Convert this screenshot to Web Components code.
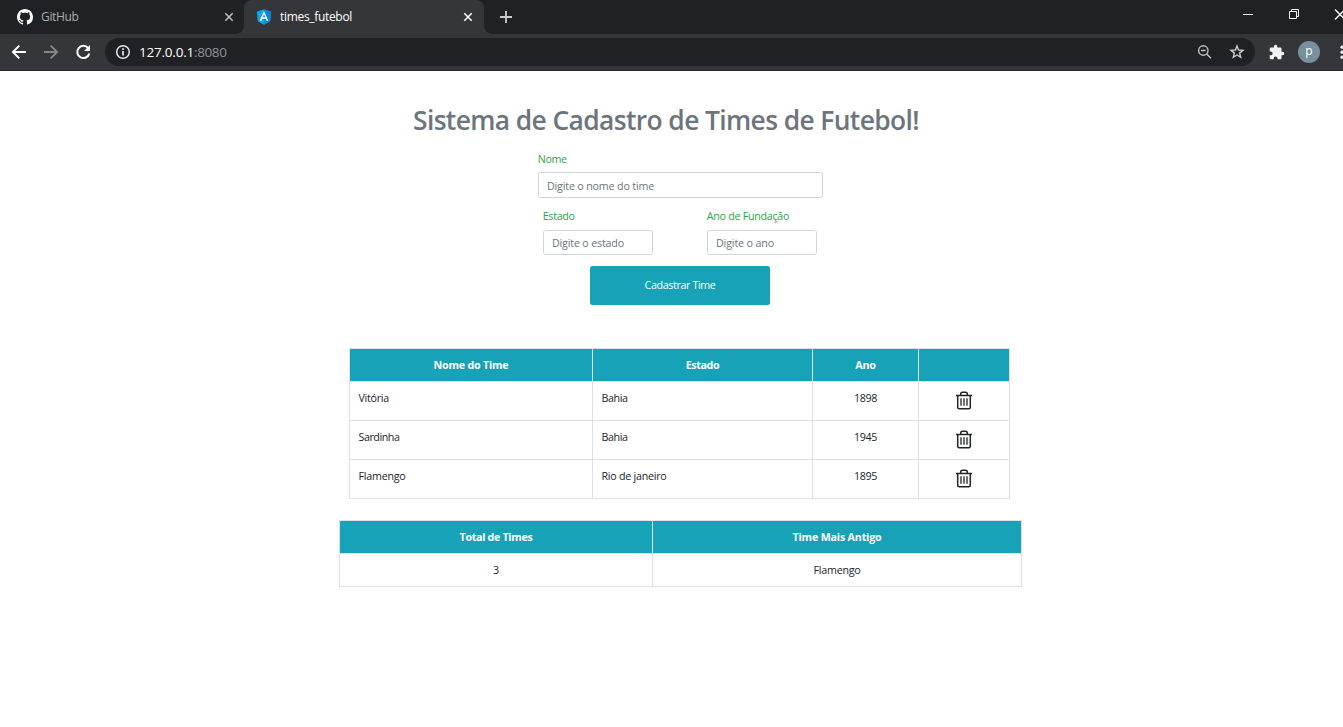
<!DOCTYPE html>
<html lang="pt-BR">
<head>
<meta charset="utf-8">
<title>times_futebol</title>
<style>
html,body{margin:0;height:100%;overflow:hidden;background:#fff}
body{font-family:"Open Sans","Noto Sans",sans-serif;font-size:10.7px;color:#212529}
</style>
</head>
<body>
<browser-window>
  <browser-tabs slot="tabs"></browser-tabs>
  <browser-toolbar slot="toolbar"></browser-toolbar>
  <teams-page></teams-page>
</browser-window>
<script>
const define = (name, html, setup) => customElements.define(name, class extends HTMLElement {
  connectedCallback() {
    if (this.shadowRoot) return;
    const t = document.createElement('template');
    t.innerHTML = html;
    this.attachShadow({mode: 'open'}).append(t.content.cloneNode(true));
    if (setup) setup.call(this, this.shadowRoot);
  }
});

// One-line label whose letter spacing is adjusted to fill the width in its "w" attribute.
define('fit-text', `<style>:host{display:inline-block;white-space:pre;line-height:1.5;flex:none}span{display:inline-block}</style><span><slot></slot></span>`, function (root) {
  const w = parseFloat(this.getAttribute('w')), s = root.querySelector('span'), n = this.textContent.length;
  if (!w) return;
  this.style.width = w + 'px';
  s.style.letterSpacing = ((w - s.getBoundingClientRect().width) / n) + 'px';
});

define('browser-window', `<style>:host{display:flex;flex-direction:column;height:100vh}</style>
<slot name="tabs"></slot><slot name="toolbar"></slot><slot></slot>`);

define('browser-tabs', `<style>
:host{display:flex;height:34px;background:#202124;color:#a9adb1;font-size:12px;overflow:hidden}
svg{flex:none;display:block}
.tab{display:flex;align-items:center;box-sizing:border-box;width:244px;padding:0 10px 0 17px;height:34px}
.tab fit-text{margin-left:8px}
.tab .x{margin-left:auto}
.on{width:240px;padding:0 11.5px 0 12px;background:#35363a;color:#fff;border-radius:8px 8px 0 0;position:relative}
.on::before,.on::after{content:"";position:absolute;bottom:0;width:8px;height:8px}
.on::before{left:-8px;background:radial-gradient(circle at 0 0,transparent 7.6px,#35363a 8.2px)}
.on::after{right:-8px;background:radial-gradient(circle at 100% 0,transparent 7.6px,#35363a 8.2px)}
.new{margin:11px 0 0 16px}
.win{display:flex;margin-left:auto}
</style>
<div class="tab"><svg width="16" height="16" viewBox="0 0 16 16"><path fill="#fff" d="M8 0C3.58 0 0 3.58 0 8c0 3.54 2.29 6.53 5.47 7.59.4.07.55-.17.55-.38 0-.19-.01-.82-.01-1.49-2.01.37-2.53-.49-2.69-.94-.09-.23-.48-.94-.82-1.13-.28-.15-.68-.52-.01-.53.63-.01 1.08.58 1.23.82.72 1.21 1.87.87 2.33.66.07-.52.28-.87.51-1.07-1.78-.2-3.64-.89-3.64-3.95 0-.87.31-1.59.82-2.15-.08-.2-.36-1.02.08-2.12 0 0 .67-.21 2.2.82.64-.18 1.32-.27 2-.27s1.36.09 2 .27c1.53-1.04 2.2-.82 2.2-.82.44 1.1.16 1.92.08 2.12.51.56.82 1.27.82 2.15 0 3.07-1.87 3.75-3.65 3.95.29.25.54.73.54 1.48 0 1.07-.01 1.93-.01 2.2 0 .21.15.46.55.38A8.01 8.01 0 0 0 16 8c0-4.42-3.58-8-8-8z"/></svg><fit-text w="37.5">GitHub</fit-text>
<svg class="x" width="10" height="10" viewBox="0 0 10 10"><path d="M1.3 1.3l7.4 7.4M8.7 1.3L1.3 8.7" stroke="#c2c4c7" stroke-width="1.5"/></svg></div>
<div class="tab on"><svg width="16" height="16" viewBox="0 0 16 16"><path fill="#0fa4f0" d="M8 .2l7.2 2.6-1.1 9.4L8 15.7l-6.1-3.5L.8 2.8z"/><path fill="#0988d4" d="M8 .2l7.2 2.6-1.1 9.4L8 15.7z"/><path fill="#fff" fill-rule="evenodd" d="M8 2L3.6 11.900h1.700l.9-2.200h3.600l.9 2.200h1.700zM8 5.200l1.300 3.100H6.700z"/></svg><fit-text w="72">times_futebol</fit-text>
<svg class="x" width="10" height="10" viewBox="0 0 10 10"><path d="M1.300 1.300l7.400 7.400M8.700 1.300L1.300 8.700" stroke="#fff" stroke-width="1.600"/></svg></div>
<svg class="new" width="12" height="12" viewBox="0 0 12 12"><path d="M6 0v12M0 6h12" stroke="#c9cbce" stroke-width="1.800"/></svg>
<svg class="win" width="103" height="34" viewBox="0 0 103 34"><g fill="none" stroke="#fff"><path d="M3 14.500h10M49.500 11.500h7v7h-7zM51.500 11.500v-2h7v7h-2"/><path stroke-width="1.300" d="M95 9.500l10 10M105 9.500l-10 10"/></g></svg>`);

define('browser-toolbar', `<style>
:host{display:flex;align-items:center;box-sizing:border-box;height:37px;padding-bottom:1px;background:#35363a;border-bottom:1px solid #29292c;overflow:hidden;font-size:13.500px}
svg{display:block;flex:none}
.bar{display:flex;align-items:center;box-sizing:border-box;width:1150px;height:28px;margin-left:13px;background:#202124;border-radius:14px;padding:0 10px;color:#fff;flex:none}
.bar fit-text{padding-top:1px}
.bar fit-text:nth-of-type(1){margin-left:8px}
.g{color:#8e9196}.l{margin-left:auto}.s{margin-left:16px}
.av{width:22px;height:22px;border-radius:50%;background:#78909c;color:#fff;margin-left:12px;display:flex;align-items:center;justify-content:center;font-size:12px;line-height:20px;padding-bottom:1px;box-sizing:border-box;flex:none}
</style>
<svg width="92" height="28" viewBox="0 0 92 28"><g fill="none" stroke-width="1.900"><path stroke="#fff" d="M26 14H13M19.300 7.600L12.900 14l6.400 6.400"/><path stroke="#85878b" d="M44 14h13M50.700 7.600L57.100 14l-6.400 6.400"/><path stroke="#fff" stroke-width="2" d="M88.200 10.200A6.100 6.100 0 1 0 89.300 15.500"/></g><path fill="#fff" d="M90 7v6h-6z"/></svg>
<div class="bar"><svg width="16" height="16" viewBox="0 0 16 16"><circle cx="8" cy="8" r="6.300" fill="none" stroke="#e8eaed" stroke-width="1.500"/><path d="M8 7v4.500M8 4.300v1.700" stroke="#e8eaed" stroke-width="1.700"/></svg><fit-text w="55">127.0.0.1</fit-text><fit-text class="g" w="32.500">:8080</fit-text>
<svg class="l" width="16" height="16" viewBox="0 0 16 16"><g fill="none" stroke="#bdc1c6" stroke-width="1.400"><circle cx="6.300" cy="6.500" r="4.700"/><path d="M4 6.500h4.600M9.700 9.900l4.300 4.300"/></g></svg>
<svg class="s" width="16" height="16" viewBox="0 0 16 16"><path fill="none" stroke="#c8cbcf" stroke-width="1.400" d="M8 2l1.600 4 4.400.3-3.400 2.800 1.100 4.200L8 11l-3.700 2.300 1.100-4.200L2 6.300 6.400 6z"/></svg></div>
<svg style="margin-left:14px" width="16" height="16" viewBox="1 0 23 23"><path fill="#f1f3f4" d="M20.500 11H19V7c0-1.100-.9-2-2-2h-4V3.500a2.500 2.500 0 0 0-5 0V5H4c-1.100 0-2 .9-2 2v3.800h1.500a2.700 2.700 0 0 1 0 5.400H2V20c0 1.100.9 2 2 2h3.800v-1.500a2.700 2.700 0 0 1 5.400 0V22H17c1.100 0 2-.9 2-2v-4h1.500a2.500 2.500 0 0 0 0-5z"/></svg>
<div class="av" style="margin-left:13px">p</div>
<svg style="margin-left:18.500px" width="6" height="16" viewBox="0 0 6 16"><g fill="#f1f3f4"><circle cx="3" cy="3.200" r="1.600"/><circle cx="3" cy="8.200" r="1.600"/><circle cx="3" cy="13.200" r="1.600"/></g></svg>`);

define('form-field', `<style>
:host{display:block}
.label{display:block;height:16px;color:#28a745;margin-bottom:var(--gap,5px)}
.box{display:flex;align-items:center;box-sizing:border-box;height:var(--h,26px);border:1px solid #ced4da;border-radius:2.500px;padding:var(--pt,2px) 8px 0;color:#6c757d}
</style><div class="label"><slot name="label"></slot></div><div class="box"><slot></slot></div>`);

define('trash-icon', `<style>:host{display:block;height:20px}svg{display:block}</style>
<svg width="18" height="20" viewBox="0 0 18 20"><g fill="none" stroke="#212529"><path stroke-width="1.500" d="M1 5.500h16M5.700 5.200V4.200q0-1.900 1.800-1.900h3q1.800 0 1.800 1.900v1M2.700 6v11.300q0 1.500 1.500 1.500h9.600q1.500 0 1.500-1.500V6"/><path stroke-width="1.300" d="M6 8.300v7.400M9 8.300v7.400M12 8.300v7.400"/></g></svg>`);

define('data-table', `<style>
:host{display:grid;gap:1px;padding:1px;background:#dee2e6;grid-template-columns:var(--cols);width:max-content}
::slotted(*){background:#fff}
</style><slot></slot>`);

define('table-cell', `<style>
:host{display:flex;box-sizing:border-box;height:38px;padding:8px 8.500px 0}
:host([center]){justify-content:center}
:host([short]){height:32px}
:host([head]){height:32px;justify-content:center;background:#17a2b8!important;color:#fff;font-weight:700}
</style><slot></slot>`);

define('teams-page', `<style>
:host{display:block;flex:1;padding-top:29px;background:#fff}
h1{margin:0 0 0 413px;font-size:26.400px;font-weight:600;line-height:40px;height:40px;color:#6c757d}
h1 fit-text{line-height:40px}
form{display:flex;flex-direction:column;width:285px;margin:11px 0 0 538px}
form-field [slot=label]{margin-left:-.3px}
.row{display:flex;justify-content:space-between;padding:0 6px 0 5px;margin-top:10px;--h:25px;--gap:6px;--pt:1px}
.row form-field{width:110px}
button{width:180px;height:39px;margin:11px 0 0 52px;border:0;border-radius:2.500px;background:#17a2b8;color:#fff;font:inherit;padding:0}
.t1{margin:43px 0 0 349px;--cols:242px 219px 105px 90px}
.t2{margin:21px 0 0 339px;--cols:312px 368px}
</style>
<h1><fit-text w="506">Sistema de Cadastro de Times de Futebol!</fit-text></h1>
<form>
<form-field><fit-text slot="label" w="29">Nome</fit-text><fit-text w="107">Digite o nome do time</fit-text></form-field>
<div class="row">
<form-field><fit-text slot="label" w="32">Estado</fit-text><fit-text w="72">Digite o estado</fit-text></form-field>
<form-field><fit-text slot="label" w="82.500">Ano de Fundação</fit-text><fit-text w="58">Digite o ano</fit-text></form-field>
</div>
<button type="button"><fit-text w="71">Cadastrar Time</fit-text></button>
</form>
<data-table class="t1"></data-table>
<data-table class="t2">
<table-cell head><fit-text w="73">Total de Times</fit-text></table-cell><table-cell head><fit-text w="89">Time Mais Antigo</fit-text></table-cell>
<table-cell short center><fit-text>3</fit-text></table-cell><table-cell short center><fit-text w="47">Flamengo</fit-text></table-cell>
</data-table>`, function (root) {
  const cell = (text, w, attr = '') => `<table-cell ${attr}>${text ? `<fit-text w="${w}">${text}</fit-text>` : ''}</table-cell>`;
  const teams = [['Vitória', 30.5, 'Bahia', 26, '1898'], ['Sardinha', 41, 'Bahia', 26, '1945'], ['Flamengo', 47, 'Rio de janeiro', 65, '1895']];
  root.querySelector('.t1').innerHTML =
    cell('Nome do Time', 75, 'head') + cell('Estado', 33.5, 'head') + cell('Ano', 20.5, 'head') + cell('', 0, 'head') +
    teams.map(t => cell(t[0], t[1]) + cell(t[2], t[3]) + cell(t[4], 23, 'center') + '<table-cell center><trash-icon></trash-icon></table-cell>').join('');
});
</script>
</body>
</html>
